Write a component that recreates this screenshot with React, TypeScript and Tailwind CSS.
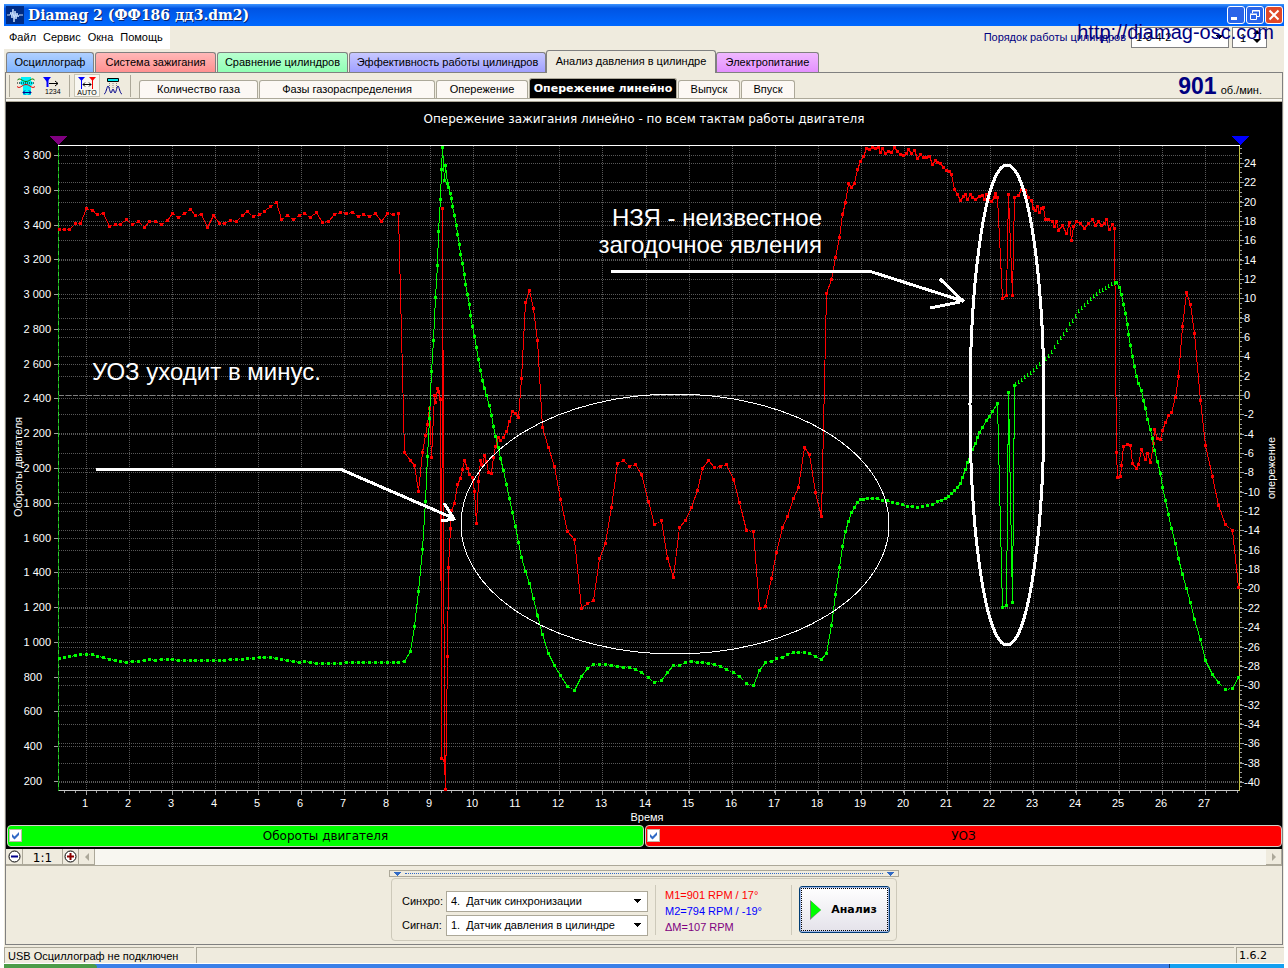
import { useState } from 'react'

type Point = [number, number]

function parse(text: string): Point[] {
  return text.trim().split(/\s+/).map((p) => p.split(',').map(Number) as Point)
}

const advance = parse(`
59,229 64,229 69,229 75,223 80,223 86,208 92,210 97,214 103,213 109,226 115,224 120,224 126,219 132,224 138,221
144,227 149,221 155,221 161,224 167,220 172,213 178,217 184,213 190,209 195,215 201,214 207,227 213,215 219,223
224,223 230,220 236,221 242,215 247,211 253,216 259,214 264,211 270,206 276,202 281,219 287,215 293,219 299,215
304,213 310,217 316,212 322,222 328,221 334,214 340,212 346,213 352,212 358,216 363,214 369,216 375,213 381,221
387,213 393,214 398,213 404,452 410,460 414,465 418,491 422,452 425,435 427,424 429,408 431,457 434,395 435,402
437,388 438,391 440,399 441,758 442,208 444,760 445,789 447,656 448,567 450,528 451,510 454,503 457,484 460,478
462,469 464,460 467,468 469,474 472,477 474,491 476,523 478,481 480,460 482,465 484,455 486,461 488,472 491,473
493,457 495,446 498,437 500,440 503,437 506,431 509,421 512,411 515,413 518,417 521,378 525,302 529,290 533,308
537,340 542,427 548,447 554,466 560,499 567,531 574,539 581,608 587,603 593,600 599,558 605,543 611,507 617,463
623,460 629,466 635,464 641,474 648,501 654,524 661,520 667,558 673,577 679,527 685,520 691,507 697,490 702,468
708,460 714,467 720,466 726,464 733,479 739,502 746,530 753,531 759,608 765,606 771,578 776,552 782,527 787,516
793,498 798,487 804,447 809,454 815,492 821,516 826,293 831,279 835,257 839,237 842,214 845,202 848,183 851,187
854,183 857,169 860,161 863,156 866,148 869,149 872,147 875,148 878,147 880,152 882,148 885,153 888,151 891,152
894,147 897,151 900,154 903,155 906,153 908,149 911,153 914,150 917,158 920,154 923,157 926,157 929,156 932,164
935,160 937,162 940,163 943,167 946,170 949,171 951,174 954,189 957,194 960,200 963,196 965,194 967,199 970,194
972,197 975,199 979,196 982,195 984,199 986,194 988,199 991,201 994,197 995,193 997,197 1002,298 1006,295
1008,194 1012,295 1014,197 1018,195 1021,189 1025,190 1028,197 1031,200 1033,208 1035,210 1037,206 1039,212
1041,208 1043,207 1045,219 1048,219 1052,221 1054,226 1056,221 1058,230 1062,225 1066,233 1069,222 1071,240
1073,226 1076,221 1080,223 1084,228 1088,223 1092,219 1095,225 1098,221 1101,225 1104,223 1106,219 1109,229
1112,224 1114,228 1116,452 1117,477 1120,476 1121,465 1123,446 1127,444 1130,445 1132,463 1136,468 1138,464
1141,449 1145,459 1147,453 1150,462 1153,443 1154,429 1157,438 1160,439 1162,430 1165,422 1168,415 1171,412
1175,397 1178,376 1182,326 1186,292 1190,304 1194,333 1200,400 1205,445 1212,476 1218,505 1225,524 1232,530
1238,587`)

const rpmStart = parse(`
59,658 64,657 69,656 75,655 80,654 86,654 92,654 97,656 103,657 109,659 115,660 120,661 126,662 132,661 138,661
144,660 149,659 155,660 161,659 167,659 172,659 178,660 184,660 190,660 195,660 201,660 207,660 213,660 219,660
224,660 230,659 236,659 242,659 247,658 253,658 259,657 264,657 270,657 276,658 281,659 287,660 293,661 299,662
304,661 310,662 316,663 322,663 328,663 334,663 340,663 346,662 352,662 358,662 363,662 369,662 375,662 381,662
387,662 393,662 398,662 404,661 410,651 414,626 418,591 422,549 425,501 427,456 429,418 431,371 433,340 435,297
437,265 438,231 440,199 441,169 442,147 444,180 445,165 447,183 448,187 450,193 451,198 452,206 454,215 456,225
457,234 459,244 460,254 462,263 464,274 465,284 467,294 469,304 470,315 472,326 474,336 476,347 478,359 480,370
482,380 484,388 486,395 489,405 491,415 493,426 495,436 498,447 500,458 503,470 506,484 509,498 512,512 515,526
518,542 521,557 525,571 529,583 533,598 537,615 542,634 548,653 554,665 560,675 567,686 574,690 581,676 587,668
593,664 599,664 605,664 611,665 617,666 623,667 629,667 635,669 641,672 648,677 654,682 661,680 667,672 673,665
679,665 685,662 691,661 697,662 702,662 708,663 714,664 720,666 726,669 733,672 739,676 746,683 753,685 759,670
765,662 771,661 776,658 782,657 787,654 793,652 798,652 804,652 809,653 815,656 821,659 826,653 831,625 835,594
839,567 842,546 845,531 848,521 851,512 854,507 857,502 860,499 863,499 867,498 872,498 877,498 882,500 887,500
892,502 897,503 902,504 907,506 912,506 917,507 922,506 927,505 932,504 937,501 941,500 945,498 948,496 951,493
954,490 957,487 960,483 962,477 965,469 967,462 972,449 975,443 977,437 979,432 982,427 986,420 989,416 992,411
997,403 1002,607 1006,605 1008,392 1012,602 1014,385`)

// dense stretch, drawn as short ticks instead of square markers
const rpmRise = parse(`
1014,385 1018,382 1023,378 1028,374 1032,371 1037,366 1042,362 1047,357 1051,352 1056,343 1061,337 1066,330
1069,324 1073,320 1077,312 1083,306 1089,300 1093,296 1098,292 1103,289 1108,286 1112,283 1116,282`)

const rpmEnd = parse(`
1116,282 1119,287 1121,294 1123,304 1125,313 1127,324 1128,334 1130,345 1132,356 1134,366 1136,376 1138,383
1141,390 1143,400 1145,408 1147,419 1150,429 1152,438 1154,450 1157,461 1160,473 1162,487 1165,500 1168,514
1171,528 1175,543 1178,558 1182,574 1186,588 1190,602 1194,619 1200,639 1205,660 1212,674 1218,682 1225,689
1232,688 1238,677`)

const leftTicks = Array.from({ length: 19 }, (_, i) => {
  const value = 200 * (i + 1)
  const label = value >= 1000 ? `${Math.floor(value / 1000)} ${String(value % 1000).padStart(3, '0')}` : String(value)
  return { label, y: Math.round(781 - i * 34.78) }
})
const rightTicks = Array.from({ length: 33 }, (_, i) => ({ label: String(24 - 2 * i), y: Math.round(163 + i * 19.34) }))
const minorRight = Array.from({ length: 133 }, (_, i) => Math.round(148 + i * 4.835)).filter((y) => y < 789)
const timeTicks = Array.from({ length: 27 }, (_, i) => ({ label: String(i + 1), x: Math.round(86 + i * 43.04) }))
const minorTime = Array.from({ length: 110 }, (_, i) => Math.round(64 + i * 10.76)).filter((x) => x < 1240)

function segments(points: Point[], steep: boolean) {
  let d = ''
  for (let i = 1; i < points.length; i++) {
    const [x0, y0] = points[i - 1]
    const [x1, y1] = points[i]
    if (Math.abs(y1 - y0) > Math.abs(x1 - x0) === steep) {
      d += `M${x0 + 0.5} ${y0 + 0.5}L${x1 + 0.5} ${y1 + 0.5}`
    }
  }
  return d
}

function Series({ points, color }: { points: Point[]; color: string }) {
  return (
    <g stroke={color} fill="none">
      <path d={segments(points, true)} />
      <path d={segments(points, false)} strokeDasharray="1 1" />
      <path d={points.map(([x, y]) => `M${x - 1} ${y - 1}h3v3h-3z`).join('')} fill={color} stroke="none" />
    </g>
  )
}

function riseTicks() {
  let d = ''
  let seg = 0
  for (let x = 1015; x < 1116; x += 3) {
    while (rpmRise[seg + 1][0] < x) seg++
    const [x0, y0] = rpmRise[seg]
    const [x1, y1] = rpmRise[seg + 1]
    const y = Math.round(y0 + ((x - x0) / (x1 - x0)) * (y1 - y0))
    d += `M${x} ${y - 2}h1v3h1v1h-2z`
  }
  return d
}

function Chart({ showRpm, showAdvance }: { showRpm: boolean; showAdvance: boolean }) {
  return (
    <svg viewBox="6 102 1276 723" className="block h-auto w-full bg-black" shapeRendering="crispEdges">
      <text x="644" y="123" textAnchor="middle" fill="#fff" fontSize="12" className="font-['DejaVu_Sans',sans-serif]">
        Опережение зажигания линейно - по всем тактам работы двигателя
      </text>

      {/* grid */}
      <g stroke="#585858" strokeDasharray="1 1">
        {leftTicks.map((t) => <path key={t.label} d={`M59 ${t.y + 0.5}H1239`} />)}
        {rightTicks.map((t) => <path key={t.label} d={`M59 ${t.y + 0.5}H1239`} />)}
        {timeTicks.map((t) => <path key={t.label} d={`M${t.x + 0.5} 146V790`} />)}
      </g>
      <path d="M59 395.5H1239" stroke="#808080" strokeDasharray="5 2" />

      {/* axes */}
      <path d="M58 145.5H1240" stroke="#fff" />
      <path d="M58 790.5H1240" stroke="#c8c8c8" />
      <path d="M58.5 146V791" stroke="#008000" />
      <path d="M58.5 146V791" stroke="#30d030" strokeDasharray="4 3" />
      <path d="M1239.5 146V791" stroke="#c0c040" />
      <g stroke="#a0a0a0">
        <path d={leftTicks.map((t) => `M54 ${t.y + 0.5}h4`).join('')} />
        <path d={rightTicks.map((t) => `M1240 ${t.y + 0.5}h4`).join('')} />
        <path d={minorRight.map((y) => `M1240 ${y + 0.5}h2`).join('')} />
        <path d={timeTicks.map((t) => `M${t.x + 0.5} 791v4`).join('')} />
        <path d={minorTime.map((x) => `M${x + 0.5} 791v2`).join('')} />
      </g>
      <g fill="#fff" fontSize="11">
        {leftTicks.map((t) => <text key={t.label} x={t.label.length > 3 ? 51 : 42} y={t.y + 4} textAnchor="end">{t.label}</text>)}
        {rightTicks.map((t) => <text key={t.label} x="1244" y={t.y + 4}>{t.label}</text>)}
        {timeTicks.map((t) => <text key={t.label} x={t.x - 1} y="807" textAnchor="middle">{t.label}</text>)}
        <text x="647" y="821" textAnchor="middle">Время</text>
        <text transform="translate(22 467) rotate(-90)" textAnchor="middle">Обороты двигателя</text>
        <text transform="translate(1275 468) rotate(-90)" textAnchor="middle">опережение</text>
      </g>
      <path d="M49 136h18l-9 9z" fill="#800080" />
      <path d="M1231 136h18l-9 9z" fill="#00f" />

      {showAdvance && <Series points={advance} color="#f00" />}
      {showRpm && (
        <>
          <Series points={rpmStart} color="#0f0" />
          <path d={riseTicks()} fill="#0f0" />
          <Series points={rpmEnd} color="#0f0" />
        </>
      )}

      {/* annotations */}
      <g stroke="#fff" fill="none">
        <ellipse cx="675" cy="524" rx="214" ry="130" />
        <ellipse cx="1007" cy="405" rx="37" ry="240" strokeWidth="3" />
        <g strokeWidth="3">
          <path d="M96 469H340L453 518M444 503L454 519L441 521" />
          <path d="M611 271H869L963 301M940 279L964 302M930 308L960 302" />
        </g>
      </g>
      <g fill="#fff" fontSize="24">
        <text x="92" y="380">УОЗ уходит в минус.</text>
        <text x="822" y="226" textAnchor="end">НЗЯ - неизвестное</text>
        <text x="822" y="253" textAnchor="end">загодочное явления</text>
      </g>
    </svg>
  )
}

const tabs = [
  { label: 'Осциллограф', style: 'w-[88px] bg-linear-to-b from-[#b0d0ff] to-[#80b4ff]' },
  { label: 'Система зажигания', style: 'w-[121px] bg-linear-to-b from-[#ffb8b8] to-[#ff9090]' },
  { label: 'Сравнение цилиндров', style: 'w-[131px] bg-linear-to-b from-[#b8ffd0] to-[#90ffb4]' },
  { label: 'Эффективность работы цилиндров', style: 'w-[197px] bg-linear-to-b from-[#c8c8ff] to-[#a0a0ff]' },
  { label: 'Анализ давления в цилиндре', style: 'w-[170px] -ml-px' },
  { label: 'Электропитание', style: 'w-[103px] -ml-px bg-linear-to-b from-[#f0b8ff] to-[#e490ff]' },
]

const subTabs = [
  { label: 'Количество газа', style: 'w-[119px]' },
  { label: 'Фазы газораспределения', style: 'w-[176px]' },
  { label: 'Опережение', style: 'w-[92px]' },
  { label: 'Опережение линейно', style: 'w-[148px]' },
  { label: 'Выпуск', style: 'w-[62px]' },
  { label: 'Впуск', style: 'w-[54px]' },
]

function Arrow({ className = '' }: { className?: string }) {
  return (
    <svg className={className} width="7" height="4" viewBox="0 0 7 4" shapeRendering="crispEdges">
      <path d="M0 0h7L3.500 4z" fill="currentColor" />
    </svg>
  )
}

function Toolbar() {
  const btn = 'flex h-[23px] w-[26px] items-center justify-center'
  return (
    <div className="flex items-center self-stretch">
      <div className="mx-[3px] h-[22px] w-px bg-[#aca899]" />
      <button className={btn} aria-label="Фазы">
        <svg width="18" height="18" viewBox="0 0 18 18" fill="none">
          <path d="M4 0h10v4l3 2-3 3v9H6V9L2 6l2-2z" fill="#00f0f8" />
          <path d="M0 3.500c3-4 5 1 9 1s6-5 9-1" stroke="#008000" />
          <path d="M0 9.500c3 3 5-2 9-2s6 5 9 2" stroke="#e00000" />
          <path d="M0 6h18" stroke="#000" strokeDasharray="1 1" />
          <path d="M6 15.500h8M8 13.500l-2 2 2 2M12 13.500l2 2-2 2" stroke="#00008b" />
        </svg>
      </button>
      <button className={btn} aria-label="Нумерация">
        <svg width="18" height="18" viewBox="0 0 18 18" fill="none">
          <path d="M0 0h8L4 5z" fill="#00f" />
          <path d="M4.500 3v7" stroke="#00f" strokeWidth="2" />
          <path d="M6 6.500h9M12 4l3 2.500L12 9" stroke="#000" />
          <text x="2" y="17" fontSize="7" fill="#000">1234</text>
        </svg>
      </button>
      <div className="mx-1 h-[22px] w-px bg-[#aca899]" />
      <button className={`${btn} border border-[#c8c5b5] bg-[#f8f7f1]`} aria-label="Авто">
        <svg width="22" height="20" viewBox="0 0 22 20" fill="none">
          <path d="M2 1h7L5.500 5zM5 4h1v9H5z" fill="#00f" />
          <path d="M13 1h7l-3.500 4zM16 4h1v9h-1z" fill="#f00" />
          <path d="M7 8.500h8M9 6.500l-2 2 2 2M13 6.500l2 2-2 2" stroke="#000" />
          <text x="11" y="19" textAnchor="middle" fontSize="7" fill="#000">AUTO</text>
        </svg>
      </button>
      <button className={btn} aria-label="Сигнал">
        <svg width="18" height="18" viewBox="0 0 18 18" fill="none">
          <path d="M3.500 1.500h11v3h-11z" fill="#00e8f0" stroke="#000" />
          <path d="M5.500 6v6M9 6v6M12.500 6v6" stroke="#808080" strokeDasharray="1 1" />
          <path d="M0 17c2 0 3-8 4-8s2 7 3 7 1-4 2-4 1 4 2 4 2-7 3-7 2 8 4 8" stroke="#00008b" />
        </svg>
      </button>
      <div className="mx-1 h-[22px] w-px bg-[#aca899]" />
    </div>
  )
}

interface LegendProps {
  label: string
  checked: boolean
  onChange: (v: boolean) => void
  color: string
}

function Legend({ label, checked, onChange, color }: LegendProps) {
  return (
    <label className={`relative flex h-[22px] flex-1 items-center rounded-sm border border-[#d4d0c8] text-black ${color}`}>
      <span className="absolute top-[3px] left-px flex">
        <input
          type="checkbox"
          checked={checked}
          onChange={(e) => onChange(e.target.checked)}
          className="size-[13px] appearance-none border border-[#c0b8a8] bg-white"
        />
        {checked && (
          <svg className="pointer-events-none absolute inset-0" width="13" height="13" viewBox="0 0 13 13">
            <path d="M3 5v3l2.500 2.500L10 6V3L5.500 7.500z" fill="#316ac5" />
          </svg>
        )}
      </span>
      <span className="flex-1 text-center font-['DejaVu_Sans',sans-serif] text-[12px]">{label}</span>
    </label>
  )
}

function Source({ id, label, value }: { id: string; label: string; value: string }) {
  return (
    <div className="flex items-center">
      <label htmlFor={id} className="w-[44px]">{label}</label>
      <span className="relative">
        <select id={id} className="block h-[21px] w-[202px] appearance-none border border-[#aca899] bg-white px-1 whitespace-pre">
          <option>{value}</option>
        </select>
        <Arrow className="pointer-events-none absolute top-2 right-[7px]" />
      </span>
    </div>
  )
}

export default function App() {
  const [tab, setTab] = useState(4)
  const [subTab, setSubTab] = useState(3)
  const [showRpm, setShowRpm] = useState(true)
  const [showAdvance, setShowAdvance] = useState(true)

  const winBtn = 'flex size-[18px] items-center justify-center rounded-[3px] border border-white'
  const zoomBtn = 'flex h-4 items-center justify-center border-r border-b border-[#aca899]'

  return (
    <div className="bg-white px-1 pt-1 font-['Liberation_Sans',Arial,sans-serif] text-[11px] leading-[13px] text-black">
      <div className="relative bg-[#efebde]">
        {/* Title bar */}
        <header className="flex h-[22px] items-center gap-1 bg-linear-to-b from-[#3c94ff] via-[#0054e3] via-20% to-[#0068ff] pr-px pl-[2px]">
          <svg width="18" height="18" viewBox="0 0 18 18">
            <path d="M0 0h18v18H0z" fill="#002c84" />
            <path d="M1 9h3l1-3 1 6 1-9 1 13 1-11 1 8 1-6 1 4 1-2h4" fill="none" stroke="#c8e0ff" />
          </svg>
          <h1 className="flex-1 font-['DejaVu_Serif',serif] text-[14px] leading-[20px] font-bold text-white [text-shadow:1px_1px_#0a246a]">
            Diamag 2 (ФФ186 дд3.dm2)
          </h1>
          <button className={`${winBtn} bg-[#2a64e8]`} aria-label="Свернуть">
            <svg width="12" height="12" viewBox="0 0 12 12"><path d="M1 8h6v3H1z" fill="#fff" /></svg>
          </button>
          <button className={`${winBtn} -ml-[3px] bg-[#2a64e8]`} aria-label="Восстановить">
            <svg width="12" height="12" viewBox="0 0 12 12" fill="none" stroke="#fff">
              <path d="M3.500 4V1.500h7v6H8M1.500 5.500h6v5h-6zM1 5h7M3 2h8" />
            </svg>
          </button>
          <button className={`${winBtn} -ml-[3px] bg-[#e04828]`} aria-label="Закрыть">
            <svg width="12" height="12" viewBox="0 0 12 12"><path d="M1.500 1.500l9 9M10.500 1.500l-9 9" stroke="#fff" strokeWidth="2" /></svg>
          </button>
        </header>

        {/* Menu */}
        <div className="flex h-[23px] items-center justify-between">
          <nav className="flex h-full w-[166px] items-center gap-[7px] bg-white pl-[5px]">
            <button>Файл</button>
            <button>Сервис</button>
            <button>Окна</button>
            <button>Помощь</button>
          </nav>
          <div className="flex items-center pr-[17px]">
            <label htmlFor="order" className="mr-[5px] text-[#000080]">Порядок работы цилиндров</label>
            <span className="relative">
              <select id="order" className="block h-[21px] w-[98px] appearance-none border border-[#808080] bg-white px-1">
                <option>1-3-4-2</option>
              </select>
              <Arrow className="pointer-events-none absolute top-2 right-[6px]" />
            </span>
            <span className="relative ml-[3px]">
              <input aria-label="Цилиндр" defaultValue="1" className="block h-[21px] w-[35px] border border-[#808080] bg-white px-[7px]" />
              <svg className="absolute top-[3px] right-[6px]" width="8" height="13" viewBox="0 0 8 13">
                <path d="M0 4l4-4 4 4zM0 9l4 4 4-4z" />
              </svg>
            </span>
          </div>
        </div>
        <a href="http://diamag-osc.com" className="absolute top-[16px] right-[10px] text-[20px] leading-[24px] text-[#000080]">
          http://diamag-osc.com
        </a>

        <div className="px-px">
          <div className="flex h-[23px] items-end gap-px pl-px" role="tablist">
            {tabs.map((t, i) => (
              <button
                key={t.label}
                role="tab"
                aria-selected={i === tab}
                onClick={() => setTab(i)}
                className={`shrink-0 rounded-t-[3px] border border-b-0 border-[#808080] text-center whitespace-nowrap ${t.style} ${
                  i === tab ? 'relative -mb-px h-[23px] bg-[#efebde] bg-none pb-[2px]' : 'h-5'
                }`}
              >
                {t.label}
              </button>
            ))}
          </div>

          <main className="border border-[#808080]">
            {/* Toolbar with the analysis views */}
            <div className="flex h-[25px] items-center">
              <Toolbar />
              <div className="ml-[4px] flex h-full items-end gap-px self-end" role="tablist">
                {subTabs.map((t, i) => (
                  <button
                    key={t.label}
                    role="tab"
                    aria-selected={i === subTab}
                    onClick={() => setSubTab(i)}
                    className={`shrink-0 rounded-t-[3px] border border-b-0 border-[#aca899] text-center whitespace-nowrap ${t.style} ${
                      i === subTab
                        ? "h-5 bg-black font-['DejaVu_Sans',sans-serif] font-bold text-white"
                        : 'h-[18px] bg-[#fcf8f4]'
                    }`}
                  >
                    {t.label}
                  </button>
                ))}
              </div>
              <p className="ml-auto flex items-baseline gap-1 pr-[20px]">
                <span className="text-[23px] leading-[24px] font-bold text-[#000080]">901</span>
                об./мин.
              </p>
            </div>
            <div className="h-1 border-t border-b border-[#aca899] bg-[#f8f7f1]" />

            <section className="bg-black">
              <Chart showRpm={showRpm} showAdvance={showAdvance} />
              <div className="flex h-6 items-start gap-px pl-px">
                <Legend label="Обороты двигателя" checked={showRpm} onChange={setShowRpm} color="bg-[#00ff00]" />
                <Legend label="УОЗ" checked={showAdvance} onChange={setShowAdvance} color="bg-[#ff0000]" />
              </div>
            </section>

            {/* Zoom and scroll */}
            <div className="flex h-[17px] border-b border-[#aca899] bg-[#f8f7f1]">
              <button className={`${zoomBtn} w-[17px] bg-[#efebde]`} aria-label="Уменьшить">
                <svg width="13" height="13" viewBox="0 0 13 13" fill="#fff" stroke="#000">
                  <circle cx="6.500" cy="6.500" r="5.500" />
                  <path d="M3 6.500h7" stroke="#00008b" strokeWidth="2" />
                </svg>
              </button>
              <button className={`${zoomBtn} w-[40px] bg-[#efebde] pt-[3px] font-['DejaVu_Sans',sans-serif] text-[12px]`}>1:1</button>
              <button className={`${zoomBtn} w-[16px] bg-[#efebde]`} aria-label="Увеличить">
                <svg width="13" height="13" viewBox="0 0 13 13" fill="#fff" stroke="#000">
                  <circle cx="6.500" cy="6.500" r="5.500" />
                  <path d="M3 6.500h7M6.500 3v7" stroke="#8b0000" strokeWidth="2" />
                </svg>
              </button>
              <button className={`${zoomBtn} w-[16px] bg-[#efebde]`} aria-label="Влево">
                <svg width="4" height="8" viewBox="0 0 4 8"><path d="M4 0v8L0 4z" fill="#aca899" /></svg>
              </button>
              <button className={`${zoomBtn} ml-auto w-[16px] bg-[#efebde]`} aria-label="Вправо">
                <svg width="4" height="8" viewBox="0 0 4 8"><path d="M0 0v8l4-4z" fill="#aca899" /></svg>
              </button>
            </div>

            <div className="flex flex-col items-center pt-1 pb-[3px]">
              <div className="flex h-[7px] w-[510px] items-center gap-1 border border-[#aca899] px-1 text-[#316ac5]">
                <Arrow />
                <span className="flex-1 border-t border-dotted" />
                <Arrow />
              </div>
              <div className="mt-px flex h-[63px] w-[506px] items-center rounded-sm border border-[#cdc9ba] pl-[10px]">
                <div className="flex flex-col gap-[3px] pt-[7px]">
                  <Source id="sync" label="Синхро:" value={'4.\u00a0 Датчик синхронизации'} />
                  <Source id="signal" label="Сигнал:" value={'1.\u00a0 Датчик давления в цилиндре'} />
                </div>
                <div className="ml-[7px] flex h-[50px] w-[137px] flex-col border-x border-[#cdc9ba] pt-[2px] pl-[9px] leading-[16px]">
                  <span className="text-[#ff0000]">M1=901 RPM / 17°</span>
                  <span className="text-[#0000ff]">M2=794 RPM / -19°</span>
                  <span className="text-[#800080]">ΔM=107 RPM</span>
                </div>
                <button className="ml-[7px] h-[47px] w-[91px] rounded-[3px] border border-[#003c74] bg-linear-to-b from-white to-[#e4e2ea] p-px shadow-[inset_0_0_0_1px_#a0b8e8]">
                  <span className="flex size-full items-center border border-dotted border-black pl-2 font-['DejaVu_Sans',sans-serif] font-bold">
                    <svg width="11" height="20" viewBox="0 0 11 20">
                      <path d="M0 0v20l11-10z" fill="#808080" />
                      <path d="M1 1v17l10-8z" fill="#00ff00" />
                    </svg>
                    <span className="flex-1 text-center">Анализ</span>
                  </span>
                </button>
              </div>
            </div>
          </main>
        </div>

        {/* Status bar */}
        <footer className="flex gap-[2px] pt-[2px]">
          <span className="h-4 w-[190px] border-t border-l border-[#aca899] pl-[3px] leading-[16px]">USB Осциллограф не подключен</span>
          <span className="h-4 flex-1 border-t border-l border-[#aca899]" />
          <span className="h-4 w-[48px] border-t border-l border-[#aca899] pl-[2px] font-['DejaVu_Sans',sans-serif] leading-[16px]">1.6.2</span>
        </footer>
      </div>
      <div className="flex h-[5px] border-t border-white bg-[#3a80e8]">
        <span className="w-[93px] rounded-tr-sm bg-[#4c9c48]" />
        <span className="ml-auto w-[115px] border-l border-[#103c70] bg-[#14a0f0]" />
      </div>
    </div>
  )
}
